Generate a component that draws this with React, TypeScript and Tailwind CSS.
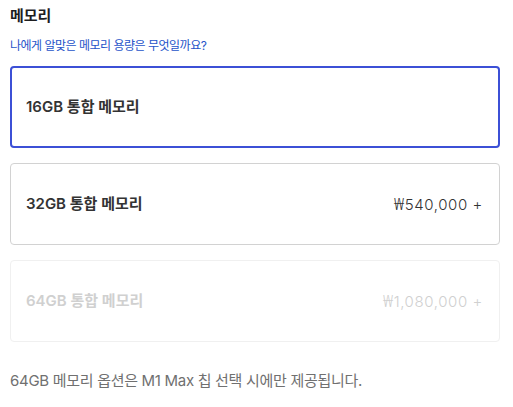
const options = [
  { label: "16GB 통합 메모리", price: "", selected: true, disabled: false },
  { label: "32GB 통합 메모리", price: "540,000 +", selected: false, disabled: false },
  { label: "64GB 통합 메모리", price: "1,080,000 +", selected: false, disabled: true },
];

export default function App() {
  return (
    <div className="w-[513px] h-[407px] bg-white pl-[10px] pr-[13px] pt-[6px] font-['Inter','Noto_Sans_CJK_KR',sans-serif]">
      <h2 className="text-[15px] font-bold text-[#1d1d1f] leading-[20px]">메모리</h2>
      <a className="block mt-[12px] text-[12px] leading-[16px] tracking-[-0.5px] text-[#2654c9]">
        나에게 알맞은 메모리 용량은 무엇일까요?
      </a>
      <div className="mt-[12px] flex flex-col gap-[15px]">
        {options.map((o) => (
          <div
            key={o.label}
            className={
              o.selected
                ? "h-[82px] rounded-[4px] border-2 border-[#3c50d6] flex items-center justify-between px-[14px]"
                : o.disabled
                ? "h-[82px] rounded-[4px] border border-[#f0f0f0] flex items-center justify-between px-[15px]"
                : "h-[82px] rounded-[4px] border border-[#d2d2d2] flex items-center justify-between px-[15px]"
            }
          >
            <span
              className={
                o.disabled
                  ? "text-[15px] font-semibold text-[#d0d0d0]"
                  : "text-[15px] font-semibold text-[#333]"
              }
            >
              {o.label}
            </span>
            {o.price && (
              <span
                className={
                  o.disabled
                    ? "text-[15px] font-light tracking-[0.6px] text-[#d0d0d0] pr-[1px]"
                    : "text-[15px] font-light tracking-[0.6px] text-[#333] pr-[1px]"
                }
              >
                <span className="font-['Noto_Sans','DejaVu_Sans',sans-serif] font-light text-[16px]">₩</span>
                {o.price}
              </span>
            )}
          </div>
        ))}
      </div>
      <p className="mt-[28px] text-[15px] tracking-[-0.3px] text-[#707070]">
        64GB 메모리 옵션은 M1 Max 칩 선택 시에만 제공됩니다.
      </p>
    </div>
  );
}
